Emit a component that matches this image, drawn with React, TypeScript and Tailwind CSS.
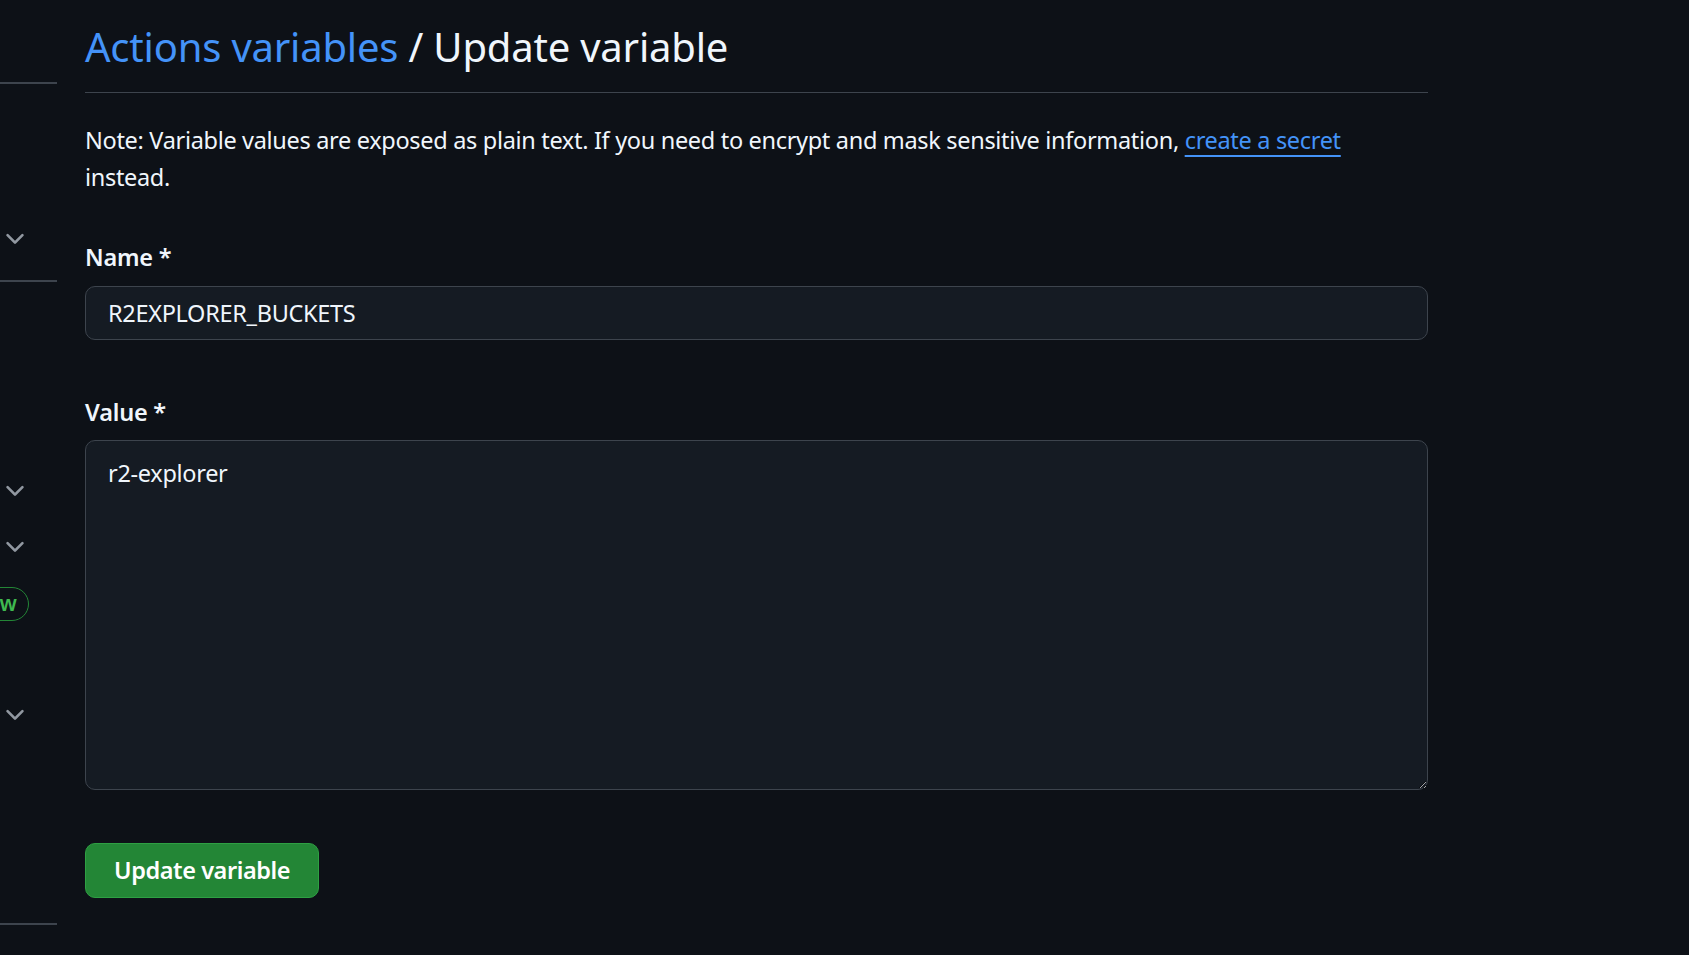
function Chevron() {
  return (
    <div className="flex h-[28px] w-[30px] items-center justify-center">
      <svg viewBox="0 0 16 16" className="h-[28px] w-[28px]" fill="#9198a1">
        <path d="M12.78 5.22a.749.749 0 0 1 0 1.06l-4.25 4.25a.749.749 0 0 1-1.06 0L3.22 6.28a.749.749 0 1 1 1.06-1.06L8 8.939l3.72-3.719a.749.749 0 0 1 1.06 0Z" />
      </svg>
    </div>
  );
}

function Sidebar() {
  return (
    <div className="flex w-[57px] shrink-0 flex-col">
      <div className="h-[82px]" />
      <div className="h-[2px] bg-[#3d444d]" />
      <div className="mt-[141px]">
        <Chevron />
      </div>
      <div className="mt-[27px] h-[2px] bg-[#3d444d]" />
      <div className="mt-[195px]">
        <Chevron />
      </div>
      <div className="mt-[28px]">
        <Chevron />
      </div>
      <div className="mt-[26px] flex w-[29px] justify-end">
        <span className="flex h-[34px] items-center whitespace-nowrap rounded-full border border-[#238636] px-[11px] text-[21px] font-semibold text-[#3fb950]">
          New
        </span>
      </div>
      <div className="mt-[80px]">
        <Chevron />
      </div>
      <div className="mt-[194px] h-[2px] bg-[#3d444d]" />
    </div>
  );
}

export default function App() {
  return (
    <div
      className="min-h-[955px] overflow-hidden bg-[#0d1117] text-[#f0f6fc]"
      style={{ fontFamily: '"Noto Sans", "Open Sans", sans-serif' }}
    >
      <div className="flex gap-[28px]">
        <Sidebar />
        <main className="w-[1343px] shrink-0 tracking-[-0.013em]">
          <div className="border-b border-[#3d444d] pt-[15px] pb-[14px]">
            <h2 className="text-[40px] font-normal leading-[63px] tracking-[-0.005em]">
              <a className="text-[#4493f8]">Actions variables</a> / Update variable
            </h2>
          </div>

          <p className="mt-[29px] text-[23.5px] leading-[36.75px] tracking-[-0.0135em]">
            Note: Variable values are exposed as plain text. If you need to encrypt and mask sensitive information,{" "}
            <a className="text-[#4493f8] underline decoration-2 underline-offset-[6px]">create a secret</a>
            <br />
            instead.
          </p>

          <div className="mt-[43px]">
            <label className="block text-[23.5px] font-semibold leading-[36.75px]">Name *</label>
            <input
              className="mt-[11px] block h-[54px] w-full rounded-[10px] border border-[#3d444d] bg-[#151b23] px-[22px] text-[23.5px] tracking-[-0.013em] text-[#f0f6fc] outline-none"
              defaultValue="R2EXPLORER_BUCKETS"
              style={{ fontFamily: "inherit" }}
            />
          </div>

          <div className="mt-[54px]">
            <label className="block text-[23.5px] font-semibold leading-[36.75px]">Value *</label>
            <textarea
              className="mt-[9px] block h-[350px] w-full resize-y rounded-[10px] border border-[#3d444d] bg-[#151b23] px-[22px] py-[14px] text-[23.5px] leading-[36.75px] tracking-[-0.013em] text-[#f0f6fc] outline-none [color-scheme:dark]"
              defaultValue="r2-explorer"
              style={{ fontFamily: "inherit" }}
            />
          </div>

          <button
            className="mt-[53px] flex h-[55px] items-center rounded-[10px] border border-[#2ea043] bg-[#238636] px-[28px] text-[23.5px] font-semibold tracking-[-0.018em] text-white"
            style={{ fontFamily: "inherit" }}
          >
            Update variable
          </button>
        </main>
      </div>
    </div>
  );
}
